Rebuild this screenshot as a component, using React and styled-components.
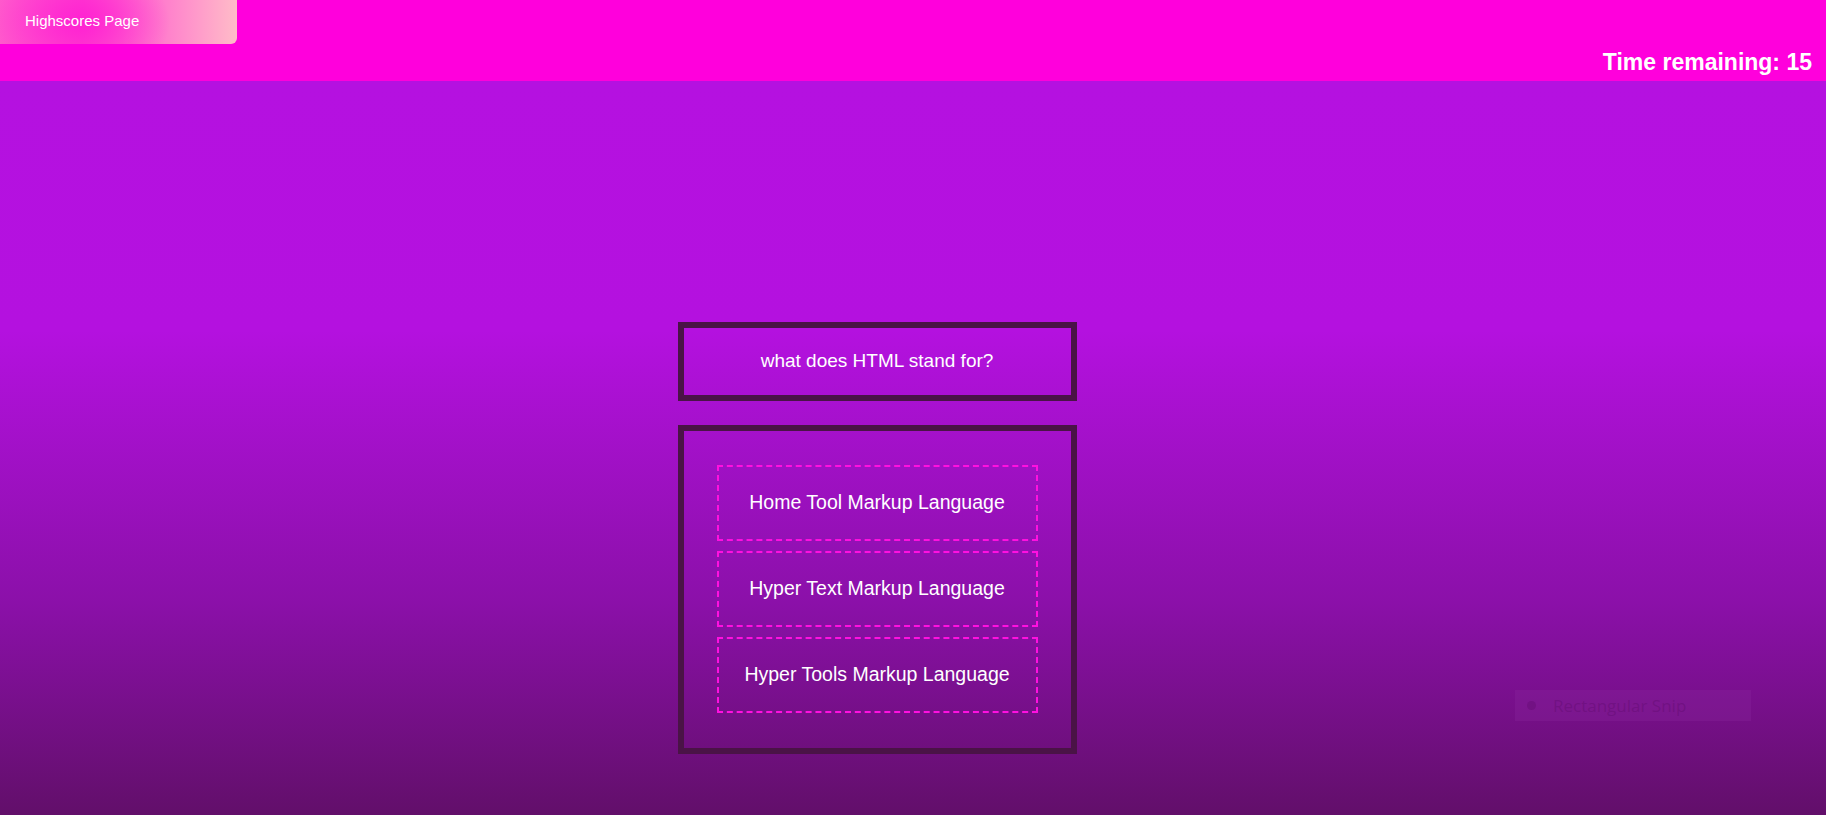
import React from "react";
import styled, { createGlobalStyle } from "styled-components";

const GlobalStyle = createGlobalStyle`
    html, body {
        margin: 0;
        padding: 0;
        height: 100%;
    }
    body {
        font-family: "Liberation Sans", Arial, sans-serif;
        color: #fff;
        overflow: hidden;
    }
    #root {
        height: 100%;
    }
`;

const Page = styled.div`
    height: 815px;
    display: flex;
    flex-direction: column;
    position: relative;
`;

const Header = styled.header`
    height: 81px;
    background: #ff00dc;
    display: flex;
    justify-content: space-between;
    align-items: flex-start;
    flex-shrink: 0;
`;

const HighscoresButton = styled.a`
    display: flex;
    align-items: center;
    width: 237px;
    height: 44px;
    box-sizing: border-box;
    padding: 0 0 4px 25px;
    font-size: 15px;
    color: #fff;
    text-decoration: none;
    border-bottom-right-radius: 6px;
    background:
        radial-gradient(ellipse 90px 60px at 80px 22px, rgba(255, 30, 210, 0.9), rgba(255, 30, 210, 0) 100%),
        linear-gradient(90deg, #ff5ccc 0%, #ff45cf 35%, #ff80cc 70%, #ffbcc8 100%);
`;

const Timer = styled.div`
    font-size: 23px;
    font-weight: bold;
    margin: 49px 14px 0 0;
    line-height: 26px;
`;

const Main = styled.main`
    flex: 1;
    background: linear-gradient(to bottom, #b511e0 0%, #b411df 34%, #8b10a9 71%, #620f6a 100%);
    display: flex;
    flex-direction: column;
    align-items: center;
    padding: 241px 72px 0 0;
`;

const Frame = styled.section`
    width: 399px;
    box-sizing: border-box;
    border: 6px solid #4a1346;
`;

const Question = styled(Frame)`
    height: 79px;
    display: flex;
    align-items: center;
    justify-content: center;
    font-size: 19px;
    padding-bottom: 1px;
`;

const Answers = styled(Frame)`
    margin-top: 24px;
    padding: 34px 33px 35px;
    display: flex;
    flex-direction: column;
    gap: 10px;
`;

const Answer = styled.button`
    height: 76px;
    box-sizing: border-box;
    border: 2px dashed #ff10e0;
    background: transparent;
    color: #fff;
    font-family: "Liberation Sans", Arial, sans-serif;
    font-size: 19.5px;
    cursor: pointer;
    padding: 0 0 1px;
`;

const SnipHint = styled.div`
    position: absolute;
    left: 1515px;
    top: 690px;
    width: 236px;
    height: 31px;
    background: rgba(140, 40, 160, 0.3);
    display: flex;
    align-items: center;
    gap: 17px;
    padding-left: 12px;
    box-sizing: border-box;
    font-family: "Open Sans", sans-serif;
    font-size: 17px;
    color: rgba(95, 10, 110, 0.4);
`;

const SnipDot = styled.span`
    width: 9px;
    height: 9px;
    border-radius: 50%;
    background: rgba(95, 10, 110, 0.35);
`;

const answers = [
    "Home Tool Markup Language",
    "Hyper Text Markup Language",
    "Hyper Tools Markup Language",
];

function App() {
    return (
        <Page>
            <GlobalStyle />
            <Header>
                <HighscoresButton href="#">Highscores Page</HighscoresButton>
                <Timer>Time remaining: 15</Timer>
            </Header>
            <Main>
                <Question>what does HTML stand for?</Question>
                <Answers>
                    {answers.map((a) => (
                        <Answer key={a}>{a}</Answer>
                    ))}
                </Answers>
            </Main>
            <SnipHint>
                <SnipDot />
                Rectangular Snip
            </SnipHint>
        </Page>
    );
}

export default App;
